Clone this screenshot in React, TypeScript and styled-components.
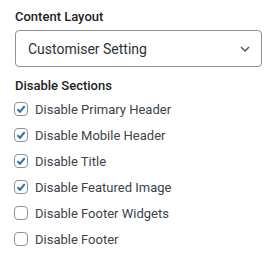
import React from "react";
import styled, { createGlobalStyle } from "styled-components";

const Global = createGlobalStyle`
  html, body { margin: 0; padding: 0; background: #ffffff; }
  body { font-family: Roboto, "Noto Sans", Arial, sans-serif; }
`;

const Panel = styled.div`
  width: 266px;
  box-sizing: border-box;
  padding: 8px 4px 0 15px;
  display: flex;
  flex-direction: column;
`;

const Label = styled.div`
  font-size: 13px;
  line-height: 18px;
  font-weight: 500;
  color: #1e1e1e;
`;

const SelectBox = styled.div`
  margin-top: 4px;
  height: 37px;
  box-sizing: border-box;
  border: 1px solid #8c8f94;
  border-radius: 4px;
  display: flex;
  align-items: center;
  justify-content: space-between;
  padding: 0 11px 0 12px;
  font-size: 14px;
  color: #2c3338;
`;

const SectionLabel = styled(Label)`
  margin-top: 10px;
`;

const List = styled.div`
  display: flex;
  flex-direction: column;
  gap: 8px;
  margin-top: 5px;
`;

const Row = styled.label`
  display: flex;
  align-items: center;
  gap: 7px;
  height: 18px;
  font-size: 13px;
  color: #3c434a;
`;

const Box = styled.span<{ $checked: boolean }>`
  width: 14px;
  height: 14px;
  margin-left: -1px;
  box-sizing: border-box;
  border: 1px solid #8c8f94;
  border-radius: 4px;
  display: inline-flex;
  align-items: center;
  justify-content: center;
  background: #fff;
  flex: none;
`;

const items: [string, boolean][] = [
  ["Disable Primary Header", true],
  ["Disable Mobile Header", true],
  ["Disable Title", true],
  ["Disable Featured Image", true],
  ["Disable Footer Widgets", false],
  ["Disable Footer", false],
];

export default function App() {
  return (
    <>
      <Global />
      <Panel>
        <Label>Content Layout</Label>
        <SelectBox>
          <span>Customiser Setting</span>
          <svg width="10" height="6" viewBox="0 0 10 6">
            <path d="M1 1 L5 5 L9 1" fill="none" stroke="#50575e" strokeWidth="1.5" />
          </svg>
        </SelectBox>
        <SectionLabel>Disable Sections</SectionLabel>
        <List>
          {items.map(([t, c]) => (
            <Row key={t}>
              <Box $checked={c}>
                {c && (
                  <svg width="12" height="12" viewBox="0 0 12 12">
                    <path d="M2.5 6.2 L5 8.7 L9.7 3.2" fill="none" stroke="#2271b1" strokeWidth="2" />
                  </svg>
                )}
              </Box>
              <span>{t}</span>
            </Row>
          ))}
        </List>
      </Panel>
    </>
  );
}
